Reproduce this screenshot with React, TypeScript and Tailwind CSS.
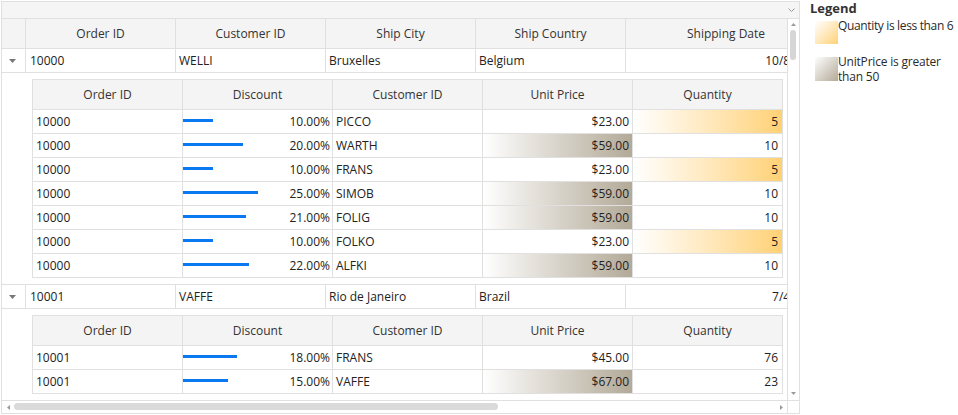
import React from "react";

const B = "border-[#e0e0e0]";

type DRow = { id: string; disc: number; cust: string; price: string; priceHi?: boolean; qty: string; qtyHi?: boolean };

const detail1: DRow[] = [
  { id: "10000", disc: 10, cust: "PICCO", price: "$23.00", qty: "5", qtyHi: true },
  { id: "10000", disc: 20, cust: "WARTH", price: "$59.00", priceHi: true, qty: "10" },
  { id: "10000", disc: 10, cust: "FRANS", price: "$23.00", qty: "5", qtyHi: true },
  { id: "10000", disc: 25, cust: "SIMOB", price: "$59.00", priceHi: true, qty: "10" },
  { id: "10000", disc: 21, cust: "FOLIG", price: "$59.00", priceHi: true, qty: "10" },
  { id: "10000", disc: 10, cust: "FOLKO", price: "$23.00", qty: "5", qtyHi: true },
  { id: "10000", disc: 22, cust: "ALFKI", price: "$59.00", priceHi: true, qty: "10" },
];

const detail2: DRow[] = [
  { id: "10001", disc: 18, cust: "FRANS", price: "$45.00", qty: "76" },
  { id: "10001", disc: 15, cust: "VAFFE", price: "$67.00", priceHi: true, qty: "23" },
];

function ExpandIcon() {
  return (
    <svg width="7" height="4" viewBox="0 0 7 4">
      <polygon points="0,0 7,0 3.5,4" fill="#777777" />
    </svg>
  );
}

function MainHeader() {
  const cols = ["Order ID", "Customer ID", "Ship City", "Ship Country"];
  return (
    <div className={`flex h-[30px] border-b ${B} bg-[#f4f4f4] text-[#333333]`}>
      <div className={`w-[24px] shrink-0 border-r ${B}`} />
      {cols.map((c) => (
        <div key={c} className={`w-[150px] shrink-0 border-r ${B} flex items-center justify-center`}>
          {c}
        </div>
      ))}
      <div className="w-[200px] shrink-0 flex items-center justify-center">Shipping Date</div>
    </div>
  );
}

function MainRow({ id, cust, city, country, date }: { id: string; cust: string; city: string; country: string; date: string }) {
  return (
    <div className={`flex h-[24px] border-b ${B} text-[#222222]`}>
      <div className={`w-[24px] shrink-0 border-r ${B} flex items-center justify-center pr-[2px]`}>
        <ExpandIcon />
      </div>
      <div className={`w-[150px] shrink-0 border-r ${B} flex items-center px-[4px]`}>{id}</div>
      <div className={`w-[150px] shrink-0 border-r ${B} flex items-center px-[3px]`}>{cust}</div>
      <div className={`w-[150px] shrink-0 border-r ${B} flex items-center px-[3px]`}>{city}</div>
      <div className={`w-[150px] shrink-0 border-r ${B} flex items-center px-[3px]`}>{country}</div>
      <div className="w-[200px] shrink-0 flex items-center justify-end px-[4px]">{date}</div>
    </div>
  );
}

function DetailGrid({ rows }: { rows: DRow[] }) {
  const cols = ["Order ID", "Discount", "Customer ID", "Unit Price", "Quantity"];
  return (
    <div className={`w-[751px] border-l border-t ${B}`}>
      <div className={`flex h-[30px] border-b ${B} bg-[#f4f4f4] text-[#333333]`}>
        {cols.map((c) => (
          <div key={c} className={`w-[150px] shrink-0 border-r ${B} flex items-center justify-center`}>
            {c}
          </div>
        ))}
      </div>
      {rows.map((r, i) => (
        <div key={i} className={`flex h-[24px] border-b ${B} text-[#222222]`}>
          <div className={`w-[150px] shrink-0 border-r ${B} flex items-center px-[3px]`}>{r.id}</div>
          <div className={`relative w-[150px] shrink-0 border-r ${B} flex items-center justify-end pr-[2px]`}>
            <div className="absolute left-0 top-[9px] h-[3px] bg-[#0a78f0]" style={{ width: r.disc * 3 }} />
            <span className="relative">{r.disc.toFixed(2)}%</span>
          </div>
          <div className={`w-[150px] shrink-0 border-r ${B} flex items-center px-[3px]`}>{r.cust}</div>
          <div
            className={`w-[150px] shrink-0 border-r ${B} flex items-center justify-end px-[3px] ${
              r.priceHi ? "bg-linear-to-r from-white to-[#b3aa98]" : ""
            }`}
          >
            {r.price}
          </div>
          <div
            className={`w-[150px] shrink-0 border-r ${B} flex items-center justify-end px-[4px] ${
              r.qtyHi ? "bg-linear-to-r from-white to-[#ffd174]" : ""
            }`}
          >
            {r.qty}
          </div>
        </div>
      ))}
    </div>
  );
}

function VScroll() {
  return (
    <div className={`relative w-[12px] shrink-0 border-l ${B} bg-white`}>
      <svg className="absolute left-[3px] top-[4px]" width="5" height="3" viewBox="0 0 5 3">
        <polygon points="0,3 5,3 2.5,0" fill="#9a9a9a" />
      </svg>
      <div className="absolute left-[2px] top-[11px] h-[30px] w-[6px] rounded-full bg-[#d6d6d6]" />
      <svg className="absolute left-[3px] bottom-[5px]" width="5" height="3" viewBox="0 0 5 3">
        <polygon points="0,0 5,0 2.5,3" fill="#9a9a9a" />
      </svg>
    </div>
  );
}

function HScroll() {
  return (
    <div className={`flex h-[13px] border-t ${B}`}>
      <div className="relative w-[785px] shrink-0">
        <svg className="absolute left-[5px] top-[4px]" width="3" height="5" viewBox="0 0 3 5">
          <polygon points="3,0 3,5 0,2.5" fill="#9a9a9a" />
        </svg>
        <div className="absolute left-[12px] top-[2px] h-[7px] w-[484px] rounded-full bg-[#dadada]" />
        <svg className="absolute left-[778px] top-[4px]" width="3" height="5" viewBox="0 0 3 5">
          <polygon points="0,0 0,5 3,2.5" fill="#9a9a9a" />
        </svg>
      </div>
      <div className={`w-[12px] shrink-0 border-l ${B}`} />
    </div>
  );
}

export default function App() {
  return (
    <div className="flex bg-white text-[12px] font-['Open_Sans','Noto_Sans',sans-serif] w-[958px] h-[415px] overflow-hidden">
      <div className={`ml-px mt-px flex h-[413px] w-[799px] shrink-0 flex-col border ${B}`}>
        <div className={`relative h-[17px] shrink-0 border-b ${B} bg-[#f5f5f5]`}>
          <svg className="absolute right-[4px] top-[6px]" width="7" height="4" viewBox="0 0 7 4">
            <polyline points="0.5,0.5 3.5,3.5 6.5,0.5" fill="none" stroke="#9a9a9a" strokeWidth="1" />
          </svg>
        </div>
        <div className="flex h-[381px] shrink-0">
          <div className="w-[785px] shrink-0 overflow-hidden">
            <div className="w-[824px]">
              <MainHeader />
              <MainRow id="10000" cust="WELLI" city="Bruxelles" country="Belgium" date="10/8/1996" />
              <div className={`border-b ${B} pl-[30px] py-[6px]`}>
                <DetailGrid rows={detail1} />
              </div>
              <MainRow id="10001" cust="VAFFE" city="Rio de Janeiro" country="Brazil" date="7/4/1996" />
              <div className={`border-b ${B} pl-[30px] py-[6px]`}>
                <DetailGrid rows={detail2} />
              </div>
            </div>
          </div>
          <VScroll />
        </div>
        <HScroll />
      </div>
      <div className="pl-[10px] text-[#2a2a2a]">
        <div className="text-[13px] font-bold leading-[16px] text-[#333333]">Legend</div>
        <div className="mt-[5px] ml-[5px] flex items-start">
          <div className="h-[23px] w-[23px] shrink-0 bg-linear-to-br from-white to-[#ffd174]" />
          <div className="mt-[-3px] w-[120px] whitespace-nowrap leading-[16px] tracking-[-0.35px]">Quantity is less than 6</div>
        </div>
        <div className="mt-[13px] ml-[5px] flex items-start">
          <div className="h-[24px] w-[23px] shrink-0 bg-linear-to-br from-white to-[#b3aa98]" />
          <div className="mt-[-3px] w-[118px] leading-[15px] tracking-[-0.2px]">UnitPrice is greater than 50</div>
        </div>
      </div>
    </div>
  );
}
